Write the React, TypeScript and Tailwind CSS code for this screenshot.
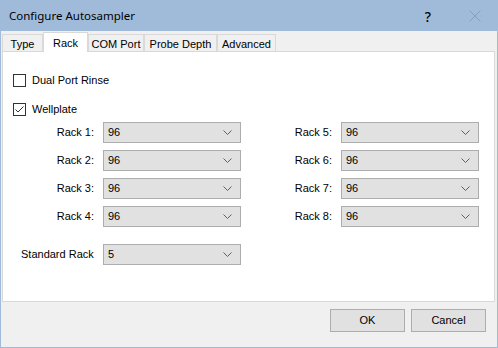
import React from "react";

const ui = { fontFamily: '"Liberation Sans", Arial, sans-serif' };
const title = { fontFamily: '"Noto Sans", "Segoe UI", sans-serif' };

// Dropdown arrow used inside the combo boxes
function Chevron() {
  return (
    <svg width="9" height="5" viewBox="0 0 9 5" className="shrink-0">
      <polyline points="0.5,0.5 4.5,4.5 8.5,0.5" fill="none" stroke="#606060" strokeWidth="1" />
    </svg>
  );
}

function Combo({ value, width = "w-[138px]" }: { value: string; width?: string }) {
  return (
    <div
      className={`${width} h-[21px] flex items-center justify-between border border-[#adadad] bg-[#e1e1e1] pl-[4px] pr-[8px] text-[11px] text-black`}
    >
      <span className="-mt-px">{value}</span>
      <Chevron />
    </div>
  );
}

function CheckBox({ checked, label }: { checked: boolean; label: string }) {
  return (
    <div className="flex items-center h-[13px] ml-[10px]">
      <div className="w-[13px] h-[13px] border border-[#333333] bg-white flex items-center justify-center">
        {checked && (
          <svg width="11" height="11" viewBox="0 0 11 11">
            <polyline points="1.5,5.5 4,8 9.5,2.5" fill="none" stroke="#333333" strokeWidth="1" />
          </svg>
        )}
      </div>
      <span className="ml-[6px] text-[11px] text-black">{label}</span>
    </div>
  );
}

const tabs = [
  { label: "Type", w: "w-[41px]" },
  { label: "Rack", w: "w-[45px]" },
  { label: "COM Port", w: "w-[56px]" },
  { label: "Probe Depth", w: "w-[73px]" },
  { label: "Advanced", w: "w-[59px]" },
];

export default function App() {
  const active = "Rack";
  const rows = [
    ["Rack 1:", "Rack 5:"],
    ["Rack 2:", "Rack 6:"],
    ["Rack 3:", "Rack 7:"],
    ["Rack 4:", "Rack 8:"],
  ];

  return (
    <div className="w-[498px] h-[348px] bg-[#a0bbd9] p-px flex flex-col select-none" style={ui}>
      {/* Title bar */}
      <div className="h-[30px] flex items-center shrink-0">
        <span className="ml-[8px] text-[11.5px] text-black" style={title}>
          Configure Autosampler
        </span>
        <span className="ml-auto mr-[38px] text-[14px] font-medium text-black" style={title}>
          ?
        </span>
        <svg width="12" height="12" viewBox="0 0 12 12" className="mr-[16px]">
          <path d="M0.5 0.5 L11.5 11.5 M11.5 0.5 L0.5 11.5" stroke="#8b9db5" strokeWidth="1" />
        </svg>
      </div>

      {/* Dialog body */}
      <div className="flex-1 bg-[#f0f0f0] flex flex-col">
        {/* Tab strip */}
        <div className="h-[20px] flex items-end pl-[1px] shrink-0">
          {tabs.map((t) =>
            t.label === active ? (
              <div
                key={t.label}
                className={`${t.w} h-[20px] -mb-px relative z-10 bg-white border-t border-l border-r border-[#d9d9d9] flex items-start justify-center pt-[2px] text-[11px] text-black`}
              >
                {t.label}
              </div>
            ) : (
              <div
                key={t.label}
                className={`${t.w} h-[17px] bg-[#f0f0f0] border-t border-l border-r border-[#d9d9d9] flex items-center justify-center pt-[2px] text-[11px] text-black`}
              >
                {t.label}
              </div>
            )
          )}
        </div>

        {/* Tab page */}
        <div className="ml-px mr-[2px] h-[251px] bg-white border border-[#d9d9d9] flex flex-col shrink-0">
          <div className="mt-[22px]">
            <CheckBox checked={false} label="Dual Port Rinse" />
          </div>
          <div className="mt-[16px]">
            <CheckBox checked={true} label="Wellplate" />
          </div>

          <div className="mt-[6px] ml-[47px] grid grid-cols-[44px_138px_82px_138px] gap-x-[9px] gap-y-[7px]">
            {rows.map(([l, r]) => (
              <React.Fragment key={l}>
                <div className="h-[21px] flex items-center justify-end text-[11px] text-black">{l}</div>
                <Combo value="96" />
                <div className="h-[21px] flex items-center justify-end text-[11px] text-black">{r}</div>
                <Combo value="96" />
              </React.Fragment>
            ))}
          </div>

          <div className="mt-[17px] ml-[18px] flex items-center">
            <span className="w-[82px] text-[11px] text-black">Standard Rack</span>
            <Combo value="5" />
          </div>
        </div>

        {/* Buttons */}
        <div className="flex justify-end gap-[6px] pt-[7px] pr-[11px]">
          <button className="w-[75px] h-[23px] border border-[#adadad] bg-[#e1e1e1] text-[11px] text-black">
            OK
          </button>
          <button className="w-[75px] h-[23px] border border-[#adadad] bg-[#e1e1e1] text-[11px] text-black">
            Cancel
          </button>
        </div>
      </div>
    </div>
  );
}
